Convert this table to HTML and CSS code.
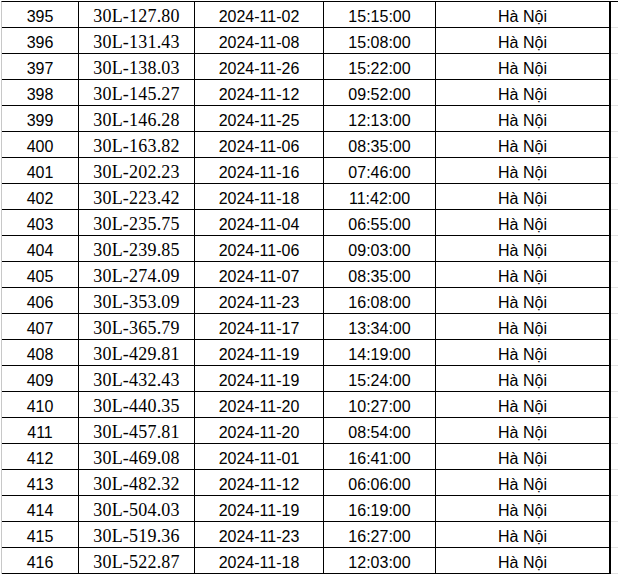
FILE: index.html
```html
<!DOCTYPE html>
<html lang="vi">
<head>
<meta charset="utf-8">
<link rel="stylesheet" href="styles.css">
</head>
<body>
<div class="sheet">
  <div class="row"><div class="c n">395</div><div class="c p">30L-127.80</div><div class="c d">2024-11-02</div><div class="c t">15:15:00</div><div class="c l">Hà Nội</div><div class="c g"></div></div>
  <div class="row"><div class="c n">396</div><div class="c p">30L-131.43</div><div class="c d">2024-11-08</div><div class="c t">15:08:00</div><div class="c l">Hà Nội</div><div class="c g"></div></div>
  <div class="row"><div class="c n">397</div><div class="c p">30L-138.03</div><div class="c d">2024-11-26</div><div class="c t">15:22:00</div><div class="c l">Hà Nội</div><div class="c g"></div></div>
  <div class="row"><div class="c n">398</div><div class="c p">30L-145.27</div><div class="c d">2024-11-12</div><div class="c t">09:52:00</div><div class="c l">Hà Nội</div><div class="c g"></div></div>
  <div class="row"><div class="c n">399</div><div class="c p">30L-146.28</div><div class="c d">2024-11-25</div><div class="c t">12:13:00</div><div class="c l">Hà Nội</div><div class="c g"></div></div>
  <div class="row"><div class="c n">400</div><div class="c p">30L-163.82</div><div class="c d">2024-11-06</div><div class="c t">08:35:00</div><div class="c l">Hà Nội</div><div class="c g"></div></div>
  <div class="row"><div class="c n">401</div><div class="c p">30L-202.23</div><div class="c d">2024-11-16</div><div class="c t">07:46:00</div><div class="c l">Hà Nội</div><div class="c g"></div></div>
  <div class="row"><div class="c n">402</div><div class="c p">30L-223.42</div><div class="c d">2024-11-18</div><div class="c t">11:42:00</div><div class="c l">Hà Nội</div><div class="c g"></div></div>
  <div class="row"><div class="c n">403</div><div class="c p">30L-235.75</div><div class="c d">2024-11-04</div><div class="c t">06:55:00</div><div class="c l">Hà Nội</div><div class="c g"></div></div>
  <div class="row"><div class="c n">404</div><div class="c p">30L-239.85</div><div class="c d">2024-11-06</div><div class="c t">09:03:00</div><div class="c l">Hà Nội</div><div class="c g"></div></div>
  <div class="row"><div class="c n">405</div><div class="c p">30L-274.09</div><div class="c d">2024-11-07</div><div class="c t">08:35:00</div><div class="c l">Hà Nội</div><div class="c g"></div></div>
  <div class="row"><div class="c n">406</div><div class="c p">30L-353.09</div><div class="c d">2024-11-23</div><div class="c t">16:08:00</div><div class="c l">Hà Nội</div><div class="c g"></div></div>
  <div class="row"><div class="c n">407</div><div class="c p">30L-365.79</div><div class="c d">2024-11-17</div><div class="c t">13:34:00</div><div class="c l">Hà Nội</div><div class="c g"></div></div>
  <div class="row"><div class="c n">408</div><div class="c p">30L-429.81</div><div class="c d">2024-11-19</div><div class="c t">14:19:00</div><div class="c l">Hà Nội</div><div class="c g"></div></div>
  <div class="row"><div class="c n">409</div><div class="c p">30L-432.43</div><div class="c d">2024-11-19</div><div class="c t">15:24:00</div><div class="c l">Hà Nội</div><div class="c g"></div></div>
  <div class="row"><div class="c n">410</div><div class="c p">30L-440.35</div><div class="c d">2024-11-20</div><div class="c t">10:27:00</div><div class="c l">Hà Nội</div><div class="c g"></div></div>
  <div class="row"><div class="c n">411</div><div class="c p">30L-457.81</div><div class="c d">2024-11-20</div><div class="c t">08:54:00</div><div class="c l">Hà Nội</div><div class="c g"></div></div>
  <div class="row"><div class="c n">412</div><div class="c p">30L-469.08</div><div class="c d">2024-11-01</div><div class="c t">16:41:00</div><div class="c l">Hà Nội</div><div class="c g"></div></div>
  <div class="row"><div class="c n">413</div><div class="c p">30L-482.32</div><div class="c d">2024-11-12</div><div class="c t">06:06:00</div><div class="c l">Hà Nội</div><div class="c g"></div></div>
  <div class="row"><div class="c n">414</div><div class="c p">30L-504.03</div><div class="c d">2024-11-19</div><div class="c t">16:19:00</div><div class="c l">Hà Nội</div><div class="c g"></div></div>
  <div class="row"><div class="c n">415</div><div class="c p">30L-519.36</div><div class="c d">2024-11-23</div><div class="c t">16:27:00</div><div class="c l">Hà Nội</div><div class="c g"></div></div>
  <div class="row"><div class="c n">416</div><div class="c p">30L-522.87</div><div class="c d">2024-11-18</div><div class="c t">12:03:00</div><div class="c l">Hà Nội</div><div class="c g"></div></div>
</div>
</body>
</html>
```

FILE: styles.css
```css
html, body {
  margin: 0;
  padding: 0;
  background: #ffffff;
}

.sheet {
  margin-top: 1px;
  margin-left: 1px;
  border-left: 1px solid #c8c8c8;
  border-top: 1px solid #000000;
  width: 617px;
  font-family: "Liberation Sans", Arial, sans-serif;
  font-size: 16px;
  color: #000000;
}

.row {
  display: grid;
  grid-template-columns: 77px 116px 129px 112px 175px 1fr;
  height: 26px;
}

.c {
  box-sizing: border-box;
  height: 26px;
  border-right: 1px solid #000000;
  border-bottom: 1px solid #000000;
  text-align: center;
  line-height: 23px;
  padding-top: 3px;
  white-space: nowrap;
}

.p {
  font-family: "Liberation Serif", "Times New Roman", serif;
  font-size: 18px;
  letter-spacing: 0.2px;
}

.l {
  border-right: 2px solid #000000;
}

.g {
  border-right: 1px solid #e2e2e2;
  border-bottom: 1px solid #e2e2e2;
}
```
